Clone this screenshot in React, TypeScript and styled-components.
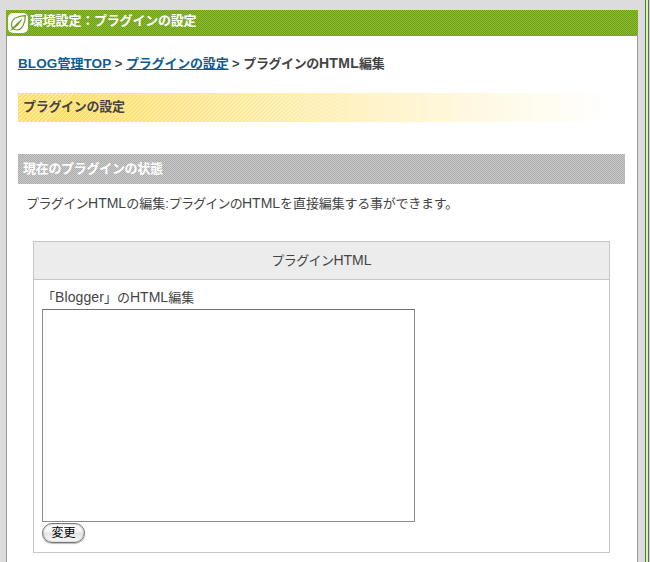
import React from "react";
import styled, { createGlobalStyle } from "styled-components";

const GlobalStyle = createGlobalStyle`
  * { box-sizing: border-box; }
  html, body { margin: 0; height: 562px; overflow: hidden; background: #dcdcdc; }
  body {
    font: 13px/18px "Liberation Sans", "Noto Sans CJK JP", sans-serif;
    color: #444;
  }
`;

const checker = (a: string, b: string) =>
  `repeating-conic-gradient(${a} 0 25%, ${b} 0 50%) 0 0 / 2px 2px`;

const Page = styled.div`
  display: flex;
  width: 650px;
  height: 562px;
  background: #dcdcdc;
`;

const Panel = styled.main`
  width: 632px;
  height: 552px;
  margin: 10px 7px 0 6px;
  background: #fff;
  border: solid #999;
  border-width: 0 1px;
`;

const Rail = styled.div`
  flex: 1;
  border-left: 1px solid #666;
  background: linear-gradient(90deg, #ccff99 2px, #666 2px 3px, #d4d4d4 3px);
`;

const TitleBar = styled.header`
  display: flex;
  align-items: center;
  height: 26px;
  margin: 0 -1px;
  padding: 0 0 0 2px;
  border-bottom: 1px solid #8a9377;
  background: ${checker("#8cbc32", "#6f9f16")};
`;

const Title = styled.h1`
  margin: 0 0 3px 2px;
  font-size: 13px;
  line-height: 18px;
  letter-spacing: -0.2px;
  color: #fff;
`;

const Leaf = styled.svg`
  width: 20px;
  height: 20px;
  display: block;
`;

const Content = styled.div`
  padding: 19px 12px 0 11px;
`;

/* Latin words run slightly larger than the Japanese text around them. */
const Latin = styled.span<{ $size?: number; $spacing?: number }>`
  font-size: ${(p) => p.$size ?? 14}px;
  line-height: 1;
  letter-spacing: ${(p) => p.$spacing ?? 0}px;
`;

const Kana = styled.span<{ $spacing?: number }>`
  letter-spacing: ${(p) => p.$spacing ?? -0.6}px;
`;

const Breadcrumb = styled.nav`
  height: 18px;
  font-weight: bold;
  white-space: pre;
`;

const Link = styled.a`
  color: #0f5d93;
  text-decoration: underline;
`;

const Heading = styled.h2<{ $tone: "yellow" | "gray" }>`
  display: flex;
  align-items: center;
  margin: 0;
  padding: 0 0 0 5px;
  font-size: 13px;
  letter-spacing: -0.3px;
  ${(p) =>
    p.$tone === "yellow"
      ? `height: 29px; margin-top: 20px; padding-bottom: 1px; color: #444;
         background:
           linear-gradient(90deg, rgba(255,255,255,0) 0, rgba(255,255,255,.5) 45%, rgba(255,255,255,.85) 80%, #fff 98%),
           repeating-linear-gradient(135deg, #ffdb58 0 2.1px, #ffeba0 2.1px 2.83px);`
      : `height: 30px; margin-top: 32px; color: #fff;
         background: ${checker("#c8c8c8", "#adadad")};`}
`;

const Lead = styled.p`
  margin: 11px 0 0 8px;
  height: 18px;
  white-space: nowrap;
`;

const FormBox = styled.section`
  width: 577px;
  height: 312px;
  margin: 28px 0 0 15px;
  border: 1px solid #c6c6c6;
`;

const FormTitle = styled.div`
  height: 38px;
  line-height: 37px;
  text-align: center;
  background: #ececec;
  border-bottom: 1px solid #c6c6c6;
`;

const FormBody = styled.div`
  padding: 9px 8px 0;
`;

const Label = styled.label`
  display: block;
  height: 20px;
`;

const Editor = styled.textarea`
  display: block;
  width: 373px;
  height: 213px;
  margin: 0;
  padding: 3px;
  border: 1px solid #8b8b8b;
  border-top-color: #707070;
  background: #fff;
  resize: none;
  outline: none;
`;

const Submit = styled.button`
  display: block;
  width: 43px;
  height: 20px;
  margin: 1px 0 0 0;
  padding: 0;
  border: 1px solid #777;
  border-radius: 10px;
  font: 12px/17px "Liberation Sans", "Noto Sans CJK JP", sans-serif;
  color: #000;
  background: linear-gradient(#fff 0, #f4f4f4 45%, #e4e4e4 50%, #fafafa 100%);
  box-shadow: inset 0 0 2px #999, 0 1px 1px #bbb;
`;

export default function App() {
  return (
    <>
      <GlobalStyle />
      <Page>
        <Panel>
          <TitleBar>
            <Leaf viewBox="0 0 20 20">
              <rect width="20" height="20" rx="5" fill="#fff" />
              <path d="M17.3 2.7C10 3 3.7 5.7 3.5 11.3c-.1 3.3 2 5.7 5 5.7C14 17 17.3 10.5 17.3 2.7Z" fill="#fff" stroke="#689b1b" strokeWidth="1.2" />
              <path d="M2.7 17.4C5.5 13.7 9.5 10 13.7 6.3 11.5 11 8 14.5 2.7 17.4Z" fill="#689b1b" stroke="#689b1b" strokeWidth=".7" />
            </Leaf>
            <Title>環境設定：プラグインの設定</Title>
          </TitleBar>
          <Content>
            <Breadcrumb>
              <Link href="#">
                <Latin $size={13.5} $spacing={0.1}>BLOG</Latin>管理<Latin $size={13.5} $spacing={0.1}>TOP</Latin>
              </Link>
              {" > "}
              <Link href="#"><Kana $spacing={-0.2}>プラグインの設定</Kana></Link>
              {" > "}
              <Kana $spacing={-0.4}>プラグインの</Kana>
              <Latin $spacing={0.3}>HTML</Latin>
              <Kana $spacing={-0.3}>編集</Kana>
            </Breadcrumb>
            <Heading $tone="yellow">プラグインの設定</Heading>
            <Heading $tone="gray">現在のプラグインの状態</Heading>
            <Lead>
              <Kana>プラグイン</Kana>
              <Latin>HTML</Latin>の編集:
              <Kana $spacing={-0.8}>プラグインの</Kana>
              <Latin>HTML</Latin>
              <Kana $spacing={-0.1}>を直接編集</Kana>
              <Kana $spacing={-0.25}>する事ができます。</Kana>
            </Lead>
            <FormBox>
              <FormTitle>
                <Kana>プラグイン</Kana>
                <Latin>HTML</Latin>
              </FormTitle>
              <FormBody>
                <Label htmlFor="html">
                  「<Latin $spacing={0.1}>Blogger</Latin>」の<Latin>HTML</Latin>編集
                </Label>
                <Editor id="html" />
                <Submit type="button">変更</Submit>
              </FormBody>
            </FormBox>
          </Content>
        </Panel>
        <Rail />
      </Page>
    </>
  );
}
